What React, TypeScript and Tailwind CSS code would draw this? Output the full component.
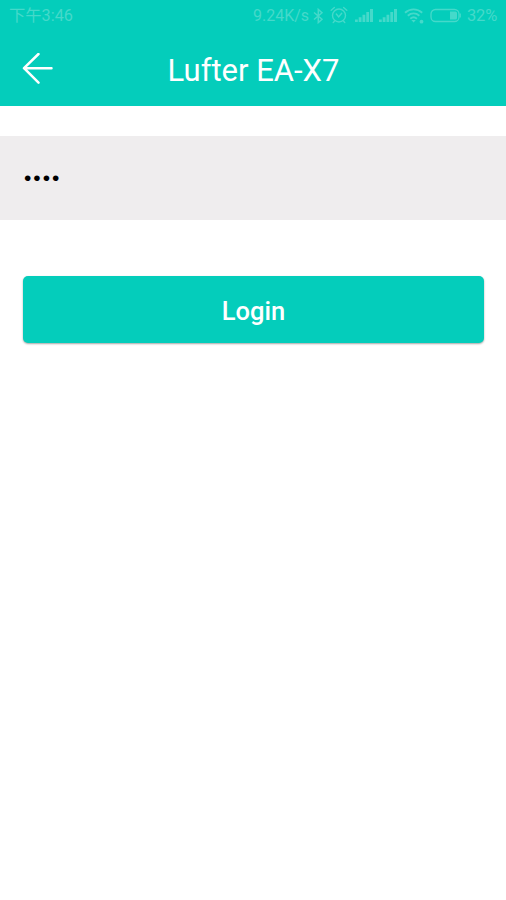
import React, { useState } from "react";

function BluetoothIcon() {
  return (
    <svg width="11" height="16" viewBox="0 0 11 16" fill="none" stroke="currentColor" strokeWidth="1.5">
      <path d="M1 4.5 9 11.3 5.3 14.6V1.4L9 4.7 1 11.5" />
    </svg>
  );
}

function AlarmIcon() {
  return (
    <svg width="18" height="18" viewBox="0 0 18 18" fill="none" stroke="currentColor" strokeWidth="1.4" strokeLinecap="round">
      <circle cx="9" cy="9.5" r="6.5" />
      <path d="M6.3 8 8.7 11l3-3.7M1.2 4.2 4.4 1.5M16.8 4.2l-3.2-2.7M4.5 15 3.2 16.6M13.5 15l1.3 1.6" />
    </svg>
  );
}

function SignalIcon() {
  return (
    <svg width="18" height="13" viewBox="0 0 18 13" fill="currentColor">
      <path d="M0 10.5h2.8V13H0zM3.7 8.2h2.8V13H3.7zM7.5 5.8h2.8V13H7.5zM11.3 3h2.8v10h-2.8zM15 0h3v13h-3z" />
    </svg>
  );
}

function WifiIcon() {
  return (
    <svg width="21" height="16" viewBox="0 0 21 16" fill="none" stroke="currentColor" strokeWidth="1.9">
      <path d="M1 4.7c5-4.5 12.2-4.5 17.2 0M3.8 7.8c3.5-3 8.1-3 11.6 0M6.3 10.8c2-1.8 4.6-1.8 6.6 0" />
      <path d="m7.4 12 2.2 2.6 2.2-2.6z" fill="currentColor" stroke="none" />
      <circle cx="17.5" cy="13.7" r="1.9" fill="currentColor" stroke="none" />
    </svg>
  );
}

function BatteryIcon() {
  return (
    <svg width="31" height="15" viewBox="0 0 31 15" fill="none" stroke="currentColor" strokeWidth="1.3">
      <rect x="1" y="1.5" width="28" height="12" rx="4.5" />
      <path d="M20 3.5h5.5A1.5 1.5 0 0 1 27 5v5a1.5 1.5 0 0 1-1.5 1.5H20z" fill="currentColor" stroke="none" />
      <path d="M30.2 5.5v4" />
    </svg>
  );
}

function StatusBar() {
  return (
    <div className="flex h-[31px] items-center justify-between pl-[9px] pr-2 text-[16px] leading-none text-[#45d9ca]">
      <span className="pt-0.5 text-[16.3px]">下午3:46</span>
      <div className="flex items-center">
        <span className="mr-[3px] w-[57px] whitespace-nowrap">9.24K/s</span>
        <BluetoothIcon />
        <div className="ml-[6px] mr-[7px] -mt-0.5"><AlarmIcon /></div>
        <SignalIcon />
        <div className="ml-[6px] mr-[7px]"><SignalIcon /></div>
        <WifiIcon />
        <div className="ml-[5px] mr-[6px]"><BatteryIcon /></div>
        <span className="w-[31px] pt-px text-[16.5px] tracking-[-0.2px]">32%</span>
      </div>
    </div>
  );
}

function App() {
  const [password, setPassword] = useState("0000");

  return (
    <div className="min-h-screen bg-white font-['Roboto','Noto_Sans_CJK_SC',sans-serif]">
      <header className="h-[106px] bg-[#04cdbb] text-white">
        <StatusBar />
        <div className="flex h-[75px] items-center px-[22px]">
          <button className="w-8 cursor-pointer" aria-label="Back">
            <svg width="32" height="32" viewBox="0 0 32 32" fill="none" stroke="currentColor" strokeWidth="2.5" strokeLinecap="round" strokeLinejoin="round">
              <path d="M16.5 1 2 15.2l14.5 14.5M2 15.2h27.5" />
            </svg>
          </button>
          <h1 className="flex-1 pl-px pr-8 pt-[3px] text-center text-[31px] leading-none">Lufter EA-X7</h1>
        </div>
      </header>
      <main className="pt-[30px]">
        <input
          type="password"
          value={password}
          onChange={(e) => setPassword(e.target.value)}
          className="block h-[84px] w-full bg-[#efedee] pl-6 pr-[23px] font-['Liberation_Sans',sans-serif] text-[21px] tracking-[2px] text-black outline-none"
        />
        <div className="pl-[23px] pr-[22px] pt-14">
          <button className="h-[67px] w-full cursor-pointer rounded-[5px] bg-[#04cdbb] pt-[3px] text-[25.5px] font-medium text-white shadow-[0_1px_2px_rgba(0,0,0,0.35)]">
            Login
          </button>
        </div>
      </main>
    </div>
  );
}

export default App;
